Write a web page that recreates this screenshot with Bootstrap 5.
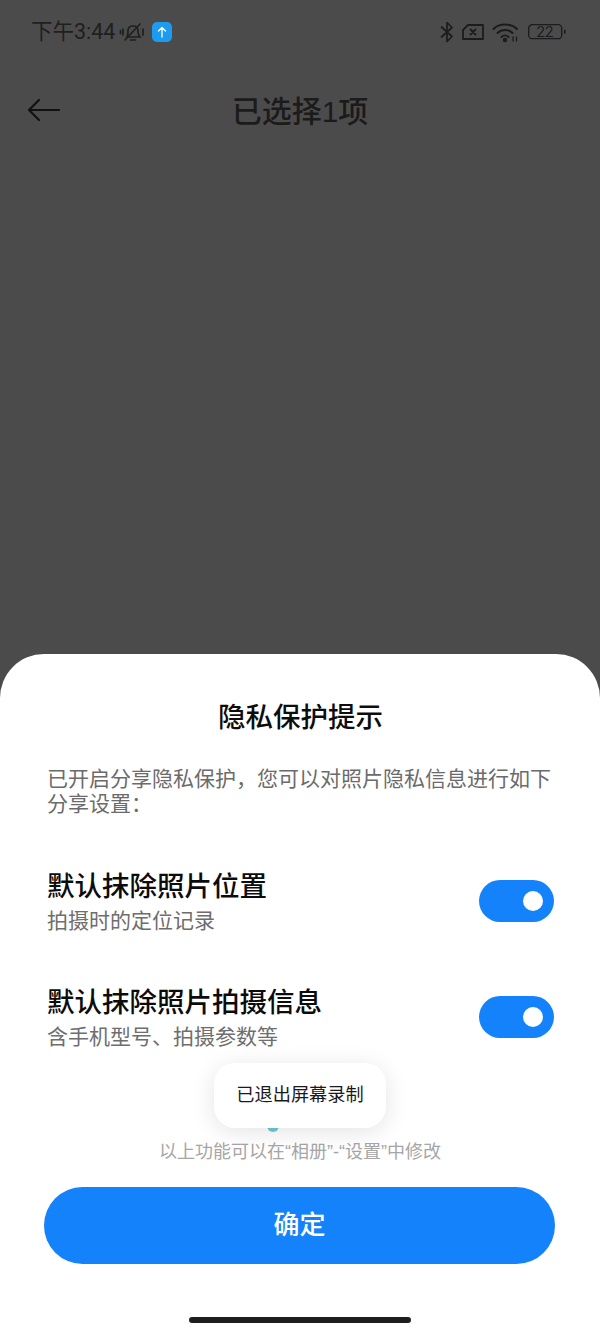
<!DOCTYPE html>
<html lang="zh-CN">
<head>
<meta charset="utf-8">
<title>隐私保护提示</title>
<link href="https://cdn.jsdelivr.net/npm/bootstrap@5.3.0/dist/css/bootstrap.min.css" rel="stylesheet">
<style>
html,body{height:100%;}
body{margin:0;background:#4b4b4b;font-family:"Liberation Sans","Noto Sans CJK SC",sans-serif;color:#000;}
.screen{width:600px;height:1333px;overflow:hidden;position:relative;}
.statusbar{height:64px;padding:0 34px 0 31px;color:#1c1c1c;}
.clock{font-family:"Roboto","Noto Sans CJK SC",sans-serif;font-size:21.500px;line-height:1;color:#1f1f1f;}
.bellicon{margin-left:4px;}
.upbadge{width:20px;height:20px;border-radius:5px;background:#1d9bf0;margin-left:7px;}
.header{height:96px;position:relative;}
.head-title{font-size:30px;line-height:1;color:#1b1b1b;font-weight:500;padding-top:33px;}
.backarrow{position:absolute;left:27px;top:34px;}
.sheet{height:679px;background:#fff;border-radius:44px 44px 0 0;padding:48px 46px 0 47px;position:relative;}
.sheet-title{font-size:27.5px;line-height:32px;font-weight:500;color:#0d0d0d;text-align:center;margin:0 0 32px;}
.sheet-desc{font-size:21px;line-height:25px;color:#6b6b6b;margin:0 0 55px;}
.opt-row{height:116px;}
.opt-name{font-size:27.5px;line-height:32px;font-weight:500;color:#0c0c0c;}
.opt-sub{font-size:21px;line-height:26px;color:#6e6e6e;margin-top:5px;}
.switcher{width:75px;height:42px;border-radius:21px;background:#1482fa;padding-right:11px;margin-top:9px;}
.switcher span{display:block;width:20px;height:20px;border-radius:50%;background:#fff;}
.footnote{font-size:18px;line-height:22px;color:#a6a6a6;text-align:center;position:absolute;left:0;right:0;top:487px;}
.okbtn{position:absolute;left:44px;top:533px;width:511px;height:77px;border-radius:39px;border:0;background:#1482fa;color:#fff;font-size:26px;font-weight:500;}
.homebar{position:absolute;left:189px;top:663px;width:222px;height:6px;border-radius:3px;background:#1d1d1d;}
.ghostmark{position:absolute;left:267px;top:1122px;width:12px;height:10px;border-radius:0 0 6px 6px;background:#6fc9d6;}
.toastbox{position:absolute;left:214px;top:1063px;width:172px;height:65px;border-radius:21px;background:#fff;box-shadow:0 4px 24px rgba(0,0,0,.11);font-size:18.2px;color:#1a1a1a;}
</style>
</head>
<body>
<div class="screen d-flex flex-column">
  <div class="statusbar d-flex align-items-center justify-content-between">
    <div class="d-flex align-items-center">
      <span class="clock">下午3:44</span>
      <svg class="bellicon" width="26" height="24" viewBox="0 0 26 24" fill="none" stroke="#1f1f1f" stroke-width="1.700" stroke-linecap="round"><path d="M8 17c1-2 1-3 1-6 0-3 2-5 5-5s5 2 5 5c0 3 0 4 2 6z"/><path d="M11.500 20h5"/><path d="M6 20 21 4"/><path d="M4 9v6M1.500 10.500v3M24 9v6"/></svg>
      <span class="upbadge d-flex align-items-center justify-content-center">
        <svg width="12" height="12" viewBox="0 0 12 12" fill="none" stroke="#fff" stroke-width="1.300" stroke-linecap="round" stroke-linejoin="round"><path d="M6 11V1.500M2.500 5 6 1.500 9.500 5"/></svg>
      </span>
    </div>
    <div class="d-flex align-items-center gap-2">
      <svg width="14" height="22" viewBox="0 0 14 22" fill="none" stroke="#1c1c1c" stroke-width="1.700" stroke-linejoin="round" stroke-linecap="round"><path d="M1.500 6 12 15.500 7 20.500V1.500L12 6.500 1.500 16"/></svg>
      <svg width="22" height="18" viewBox="0 0 22 18" fill="none" stroke="#1c1c1c" stroke-width="1.800" stroke-linejoin="round" stroke-linecap="round"><path d="M6 2h15v14H1V7z"/><path d="M8.500 6.500l5 5M13.500 6.500l-5 5"/></svg>
      <svg width="28" height="22" viewBox="0 0 28 22" fill="none" stroke="#1c1c1c" stroke-width="2" stroke-linecap="round"><path d="M1.500 8C7 2 19 2 25 8"/><path d="M5.500 12c4-4 11-4 15 0"/><path d="M9.500 16c2-2 5-2 7 0"/><circle cx="13" cy="19" r="1.200" fill="#1c1c1c"/><path d="M21 16v4M24.500 16v4" stroke-width="1.300"/></svg>
      <svg width="38" height="18" viewBox="0 0 38 18" fill="none"><rect x=".7" y="1.700" width="33" height="14" rx="3.500" stroke="#1c1c1c" stroke-width="1.300"/><text x="17" y="14" font-size="15" fill="#1c1c1c" text-anchor="middle" font-family="Roboto,sans-serif">22</text><rect x="36" y="6.500" width="1.600" height="4.500" rx=".8" fill="#1c1c1c"/></svg>
    </div>
  </div>
  <div class="header d-flex align-items-start justify-content-center">
    <svg class="backarrow" width="34" height="24" viewBox="0 0 34 24" fill="none" stroke="#111" stroke-width="2.200" stroke-linecap="round" stroke-linejoin="round"><path d="M32 12H2M12 2 2 12l10 10"/></svg>
    <div class="head-title">已选择1项</div>
  </div>
  <div class="flex-grow-1"></div>
  <div class="sheet">
    <h1 class="sheet-title">隐私保护提示</h1>
    <p class="sheet-desc">已开启分享隐私保护，您可以对照片隐私信息进行如下分享设置：</p>
    <div class="opt-row d-flex justify-content-between align-items-start">
      <div><div class="opt-name">默认抹除照片位置</div><div class="opt-sub">拍摄时的定位记录</div></div>
      <div class="switcher d-flex align-items-center justify-content-end"><span></span></div>
    </div>
    <div class="opt-row d-flex justify-content-between align-items-start">
      <div><div class="opt-name">默认抹除照片拍摄信息</div><div class="opt-sub">含手机型号、拍摄参数等</div></div>
      <div class="switcher d-flex align-items-center justify-content-end"><span></span></div>
    </div>
    <div class="footnote">以上功能可以在“相册”-“设置”中修改</div>
    <button type="button" class="btn okbtn">确定</button>
    <div class="homebar"></div>
  </div>
  <div class="ghostmark"></div>
  <div class="toastbox d-flex align-items-center justify-content-center">已退出屏幕录制</div>
</div>
<script src="https://cdn.jsdelivr.net/npm/bootstrap@5.3.0/dist/js/bootstrap.bundle.min.js"></script>
</body>
</html>
